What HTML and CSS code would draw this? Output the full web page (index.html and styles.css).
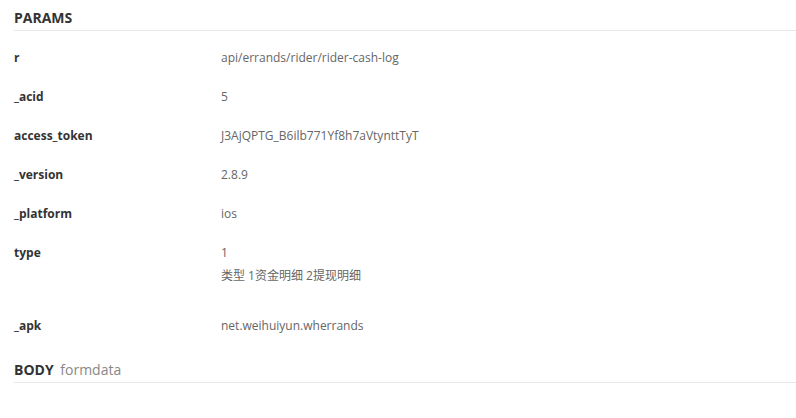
FILE: index.html
```html
<!DOCTYPE html>
<html>
<head>
    <title>PARAMS</title>
    <link rel="stylesheet" href="styles.css">
</head>
<body>
    <div class="doc">
        <h3 class="section-title">PARAMS</h3>
        <table class="param-table">
            <tr>
                <td class="param-key">r</td>
                <td class="param-value">api/errands/rider/rider-cash-log</td>
            </tr>
            <tr>
                <td class="param-key">_acid</td>
                <td class="param-value">5</td>
            </tr>
            <tr>
                <td class="param-key">access_token</td>
                <td class="param-value">J3AjQPTG_B6ilb771Yf8h7aVtynttTyT</td>
            </tr>
            <tr>
                <td class="param-key">_version</td>
                <td class="param-value">2.8.9</td>
            </tr>
            <tr>
                <td class="param-key">_platform</td>
                <td class="param-value">ios</td>
            </tr>
            <tr>
                <td class="param-key">type</td>
                <td class="param-value">
                    1
                    <div class="param-desc">类型 1资金明细 2提现明细</div>
                </td>
            </tr>
            <tr>
                <td class="param-key">_apk</td>
                <td class="param-value">net.weihuiyun.wherrands</td>
            </tr>
        </table>
        <h3 class="section-title">BODY <span class="section-sub">formdata</span></h3>
    </div>
</body>
</html>
```

FILE: styles.css
```css
body {
    font-family: 'Open Sans', 'Noto Sans CJK SC', sans-serif;
    background: #fff;
    margin: 0;
    padding: 0;
}

.doc {
    padding: 8px 0 0 14px;
}

.section-title {
    margin: 0;
    font-size: 14px;
    font-weight: 700;
    color: #333;
    line-height: 20px;
    padding-bottom: 2px;
    border-bottom: 1px solid #e8e8e8;
}

.section-sub {
    font-weight: 400;
    color: #888;
    margin-left: 3px;
}

.param-table {
    width: 100%;
    border-collapse: collapse;
    margin: 7px 0 15px;
}

.param-table td {
    padding: 10px 0;
    vertical-align: top;
    font-size: 12px;
    line-height: 19px;
}

.param-key {
    width: 207px;
    font-weight: 700;
    color: #333;
}

.param-value {
    color: #666;
}

.param-desc {
    margin: 4px 0 11px;
}
```
